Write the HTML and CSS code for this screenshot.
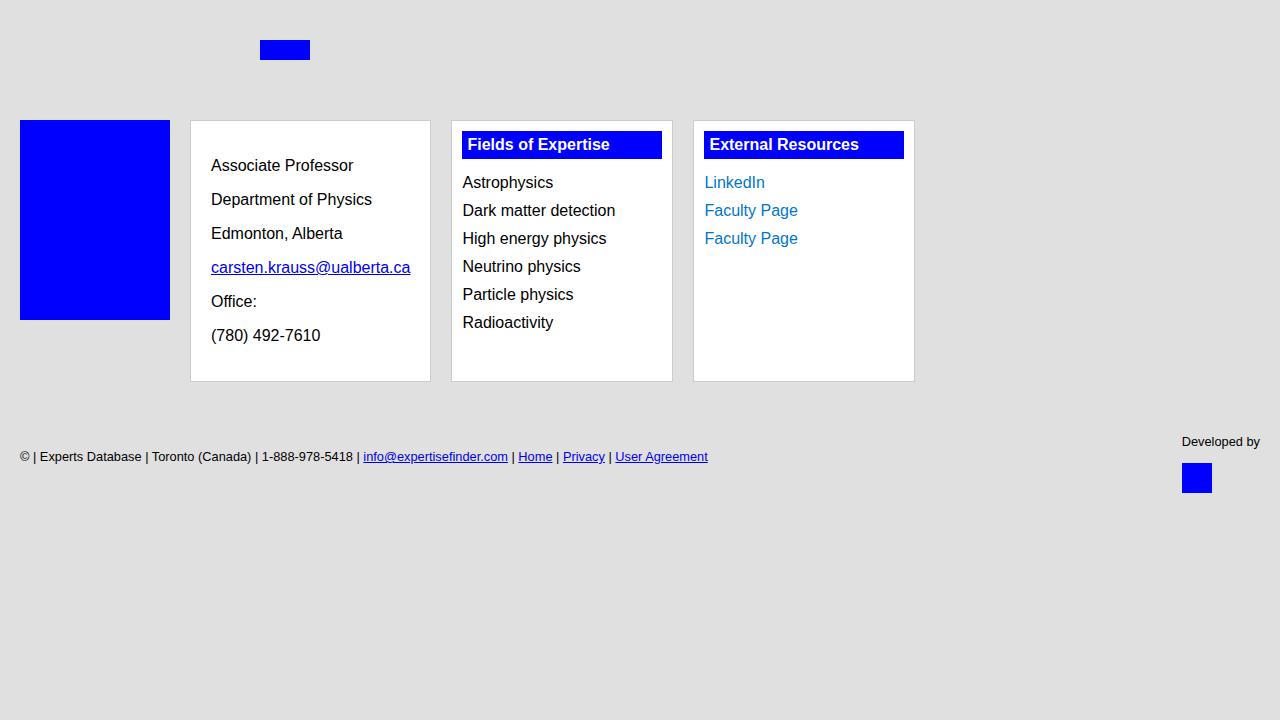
FILE: index.html
```html
<!DOCTYPE html>
<html lang="en">
<head>
<meta charset="utf-8">
<title>Carsten Krauss - Experts Database</title>
<link rel="stylesheet" href="styles.css">
</head>
<body>
<header class="site-header">
  <div class="logo"></div>
</header>
<main class="profile">
  <div class="photo"></div>
  <section class="card info">
    <p>Associate Professor</p>
    <p>Department of Physics</p>
    <p>Edmonton, Alberta</p>
    <p><a class="email" href="#">carsten.krauss@ualberta.ca</a></p>
    <p>Office:</p>
    <p>(780) 492-7610</p>
  </section>
  <section class="card box">
    <h3 class="box-title">Fields of Expertise</h3>
    <ul class="list">
      <li>Astrophysics</li>
      <li>Dark matter detection</li>
      <li>High energy physics</li>
      <li>Neutrino physics</li>
      <li>Particle physics</li>
      <li>Radioactivity</li>
    </ul>
  </section>
  <section class="card box">
    <h3 class="box-title">External Resources</h3>
    <ul class="list links">
      <li><a href="#">LinkedIn</a></li>
      <li><a href="#">Faculty Page</a></li>
      <li><a href="#">Faculty Page</a></li>
    </ul>
  </section>
</main>
<footer class="site-footer">
  <div class="footer-text">© | Experts Database | Toronto (Canada) | 1-888-978-5418 | <a href="#">info@expertisefinder.com</a> | <a href="#">Home</a> | <a href="#">Privacy</a> | <a href="#">User Agreement</a></div>
  <div class="dev">
    <div class="dev-label">Developed by</div>
    <div class="dev-logo"></div>
  </div>
</footer>
</body>
</html>
```
FILE: styles.css
```css
html, body {
  margin: 0;
  padding: 0;
  background: #e0e0e0;
  font-family: "Liberation Sans", Arial, sans-serif;
  color: #000;
}
.site-header {
  padding: 40px 0 0 260px;
  height: 60px;
}
.logo {
  width: 50px;
  height: 20px;
  background: #0000ff;
}
.profile {
  display: flex;
  align-items: stretch;
  gap: 20px;
  padding: 20px 20px 0 20px;
}
.photo {
  width: 150px;
  height: 200px;
  background: #0000ff;
  flex: none;
}
.card {
  background: #fff;
  border: 1px solid #cccccc;
}
.info {
  padding: 20px;
  font-size: 16px;
  line-height: 18px;
}
.info p {
  margin: 16px 0;
}
.email {
  color: #0000ee;
  text-decoration: underline;
}
.box {
  width: 200px;
  padding: 10px;
}
.box-title {
  margin: 0;
  background: #0000ff;
  color: #fff;
  font-size: 16px;
  font-weight: bold;
  line-height: 18px;
  padding: 5px 5px;
}
.list {
  list-style: none;
  margin: 10px 0 0 0;
  padding: 0;
  font-size: 16px;
  line-height: 28px;
}
.links a {
  color: #0077cc;
  text-decoration: none;
}
.site-footer {
  display: flex;
  justify-content: space-between;
  align-items: flex-start;
  padding: 53px 20px 20px 20px;
  font-size: 12.8px;
}
.footer-text {
  margin-top: 15px;
  line-height: 14px;
}
.footer-text a {
  color: #0000ee;
  text-decoration: underline;
}
.dev-label {
  line-height: 14px;
  margin-bottom: 14px;
}
.dev-logo {
  width: 30px;
  height: 30px;
  background: #0000ff;
}
```
